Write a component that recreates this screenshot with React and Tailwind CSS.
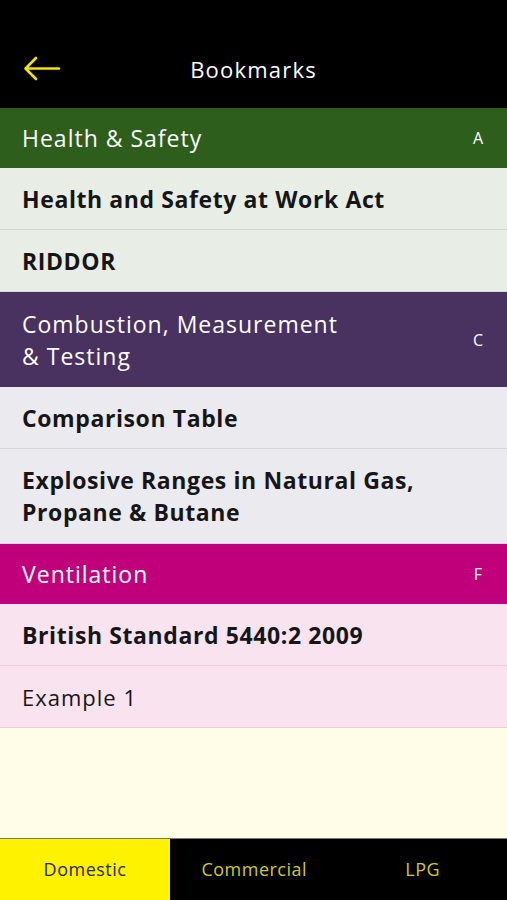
import React from 'react';

function SectionHeader({ title, letter, bg, tall }) {
    return (
        <div className={`flex items-center justify-between pl-[22px] pr-[22px] text-white ${bg} ${tall ? 'h-[95px]' : 'h-[60px]'}`}>
            <div className="text-[23px] leading-[32px] tracking-[1px]">{title}</div>
            <div className="text-[16px] w-[14px] text-center">{letter}</div>
        </div>
    );
}

function Row({ children, bg, line, bold = true, tall }) {
    return (
        <div className={`flex items-center pl-[22px] pr-4 border-b ${bg} ${line} ${tall ? 'h-[95px]' : 'h-[62px]'}`}>
            <div className={`leading-[32px] text-[#161616] ${bold ? 'text-[23px] font-bold tracking-[0.6px]' : 'text-[22px] tracking-[1px]'}`}>{children}</div>
        </div>
    );
}

export default function App() {
    return (
        <div className="w-[507px] h-[900px] flex flex-col bg-[#fffde8] overflow-hidden" style={{ fontFamily: '"Open Sans", Lato, sans-serif' }}>
            {/* top bar */}
            <div className="h-[108px] bg-black relative flex items-end pb-[22px] justify-center shrink-0">
                <svg className="absolute left-[22px] top-[55px]" width="40" height="28" viewBox="0 0 40 28" fill="none">
                    <path d="M37 13.5H4M14 3L3.5 13.5L14 24" stroke="#f2e200" strokeWidth="2.6" strokeLinecap="round" strokeLinejoin="round" />
                </svg>
                <div className="text-white text-[22px] font-medium tracking-[1.2px]">Bookmarks</div>
            </div>

            <SectionHeader title="Health & Safety" letter="A" bg="bg-[#2d5e1c]" />
            <Row bg="bg-[#e8ede6]" line="border-[#d3d8d1]">Health and Safety at Work Act</Row>
            <Row bg="bg-[#e8ede6]" line="border-[#d3d8d1]">RIDDOR</Row>

            <SectionHeader title={<>Combustion, Measurement<br />&amp; Testing</>} letter="C" bg="bg-[#4a3260]" tall />
            <Row bg="bg-[#ebeaef]" line="border-[#d5d4da]">Comparison Table</Row>
            <Row bg="bg-[#ebeaef]" line="border-[#d5d4da]" tall>Explosive Ranges in Natural Gas,<br />Propane &amp; Butane</Row>

            <SectionHeader title="Ventilation" letter="F" bg="bg-[#c0007a]" />
            <Row bg="bg-[#f8e3ef]" line="border-[#efc9dd]">British Standard 5440:2 2009</Row>
            <Row bg="bg-[#f8e3ef]" line="border-[#efc9dd]" bold={false}>Example 1</Row>

            <div className="flex-1" />

            {/* bottom tabs */}
            <div className="h-[62px] flex shrink-0 text-[18px] tracking-[0.5px] border-t border-[#777]">
                <div className="w-[170px] bg-[#fff200] flex items-center justify-center text-[#2c2a10]">Domestic</div>
                <div className="flex-1 bg-black flex items-center justify-center text-[#cfc930]">Commercial</div>
                <div className="flex-1 bg-black flex items-center justify-center text-[#cfc930]">LPG</div>
            </div>
        </div>
    );
}
